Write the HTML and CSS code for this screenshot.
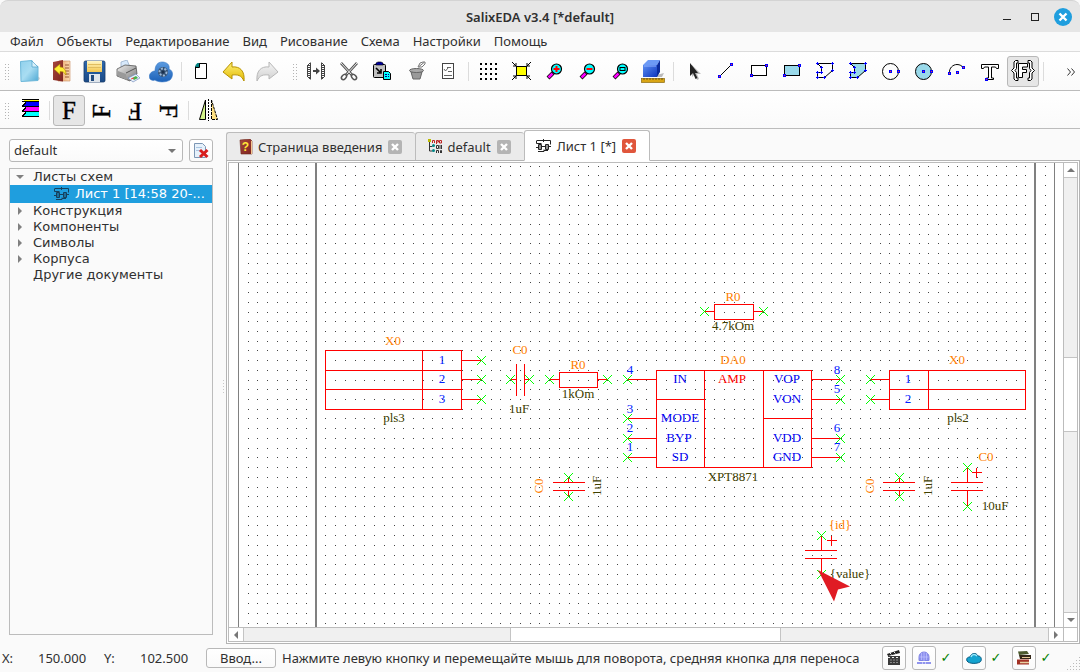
FILE: index.html
```html
<!DOCTYPE html>
<html lang="ru">
<head>
<meta charset="utf-8">
<title>SalixEDA v3.4 [*default]</title>
<link rel="stylesheet" href="styles.css">
</head>
<body>
<svg class="defs" width="0" height="0" aria-hidden="true">
  <defs>
    <linearGradient id="gPage" x1="0" y1="0" x2="1" y2="1"><stop offset="0" stop-color="#8fd0ec"/><stop offset=".5" stop-color="#a9ddf2"/><stop offset="1" stop-color="#4fa9d4"/></linearGradient>
    <linearGradient id="gBook" x1="0" y1="0" x2="1" y2="1"><stop offset="0" stop-color="#a8473c"/><stop offset="1" stop-color="#7c231f"/></linearGradient>
    <linearGradient id="gLeaf" x1="0" y1="0" x2="1" y2="0"><stop offset="0" stop-color="#e79a5c"/><stop offset="1" stop-color="#fbdcb4"/></linearGradient>
    <linearGradient id="gDisk" x1="0" y1="0" x2="0" y2="1"><stop offset="0" stop-color="#2d67ae"/><stop offset="1" stop-color="#1b4a86"/></linearGradient>
    <linearGradient id="gLabel" x1="0" y1="0" x2="0" y2="1"><stop offset="0" stop-color="#fff6c4"/><stop offset="1" stop-color="#f3c64d"/></linearGradient>
    <linearGradient id="gMetal" x1="0" y1="0" x2="1" y2="1"><stop offset="0" stop-color="#eeeeee"/><stop offset="1" stop-color="#777777"/></linearGradient>
    <linearGradient id="gCloud" x1="0" y1="0" x2="0" y2="1"><stop offset="0" stop-color="#5b9be0"/><stop offset="1" stop-color="#1c61b8"/></linearGradient>
    <linearGradient id="gGold" x1="0" y1="0" x2="0" y2="1"><stop offset="0" stop-color="#fff27a"/><stop offset="1" stop-color="#e2b800"/></linearGradient>
    <linearGradient id="gGray" x1="0" y1="0" x2="0" y2="1"><stop offset="0" stop-color="#f6f6f6"/><stop offset="1" stop-color="#cfcfcf"/></linearGradient>
    <linearGradient id="gCube" x1="0" y1="0" x2="1" y2="1"><stop offset="0" stop-color="#5b8df0"/><stop offset="1" stop-color="#0d36c0"/></linearGradient>
    <g id="lens"><path d="M11 13 6 18" stroke="#000" stroke-width="4"/><path d="M10.500 13.500 6.500 17.500" stroke="#f0f" stroke-width="2.500"/><circle cx="14.500" cy="9" r="5" fill="#0ff" stroke="#000" stroke-width="1.200"/></g>
    <g id="node"><rect x="-2" y="-2" width="3" height="3" fill="#00f"/><rect x="-1" y="-1" width="1" height="1" fill="#f33"/></g>
    <g id="sheet" fill="none" stroke-width="1"><path d="M2.500 5.500h3v5h-3zM9.500 5.500h3v5h-3zM.5 4.500h5M.5 1.500v3M1 1.500h13.500v4M12.500 7.500h2.500M2 12.500h6v-2M8 11.500h4M7.500 0v3M5.500 7.500h4M0 8.500h2.500M4 5v6M11 5v6"/></g>
    <path id="pin" d="M-4.500-4.500l9 9M4.500-4.500l-9 9"/>
    <path id="polyShape" d="M4.500 3.500h15v7l-8 7h-7v-5h4v-5z"/>
    <path id="polyNodes" d="M3 3.500h3M4.500 2v3M18 3.500h3M19.500 2v3M18 10.500h3M19.500 9v3M10 17.500h3M11.500 16v3M3 17.500h3M4.500 16v3M3 12.500h3M4.500 11v3M7 12.500h3M8.500 11v3M7 7.500h3M8.500 6v3"/>
  </defs>
</svg>

<header class="titlebar">
  <h1 class="title">SalixEDA v3.4 [*default]</h1>
  <div class="winbtns">
    <button class="winbtn" aria-label="Свернуть"><svg width="18" height="18"><path d="M5 11.500h8" stroke="#222"/></svg></button>
    <button class="winbtn" aria-label="Развернуть"><svg width="18" height="18"><rect x="5.500" y="5.500" width="7" height="7" fill="none" stroke="#222"/></svg></button>
    <button class="winbtn" aria-label="Закрыть"><svg width="18" height="18"><circle cx="9" cy="9" r="9" fill="#1f9ede"/><path d="M5.500 5.500l7 7M12.500 5.500l-7 7" stroke="#fff" stroke-width="2.400"/></svg></button>
  </div>
</header>

<nav class="menubar">
  <button class="menu">Файл</button><button class="menu">Объекты</button><button class="menu">Редактирование</button><button class="menu">Вид</button><button class="menu">Рисование</button><button class="menu">Схема</button><button class="menu">Настройки</button><button class="menu">Помощь</button>
</nav>

<div class="toolbar" role="toolbar">
  <span class="handle first"></span>
  <button class="tool" aria-label="Создать"><svg width="24" height="24"><path d="M6 21l16-1 1-2-3-2" fill="#ccc"/><path d="M3.500 1.500 15 .5l1 4 5 2v14l-17 1z" fill="url(#gPage)" stroke="#6db8da"/><path d="M15 1v6h6z" fill="#d8f1fb" stroke="#4c9fc8" stroke-width=".7"/></svg></button>
  <button class="tool" aria-label="Открыть"><svg width="24" height="24"><path d="M9 1h11v20H8z" fill="url(#gLeaf)" stroke="#c98a5c" stroke-width=".6"/><path d="M15 5h4M15 8h4M15 11h4M15 14h4M15 17h4" stroke="#9a5a34"/><path d="M3 2 13 0v21.500L3 20z" fill="url(#gBook)"/><path d="M4 9l6-5v3c4 0 6 3 6 8-2-3-3-3.500-6-3.500v3z" fill="#ffee36" stroke="#b68b00" stroke-width=".6"/></svg></button>
  <button class="tool" aria-label="Сохранить"><svg width="24" height="24"><rect x="1" y="1" width="21" height="21" rx="1.500" fill="url(#gDisk)" stroke="#173a68" stroke-width=".8"/><rect x="4" y="1" width="15" height="11" fill="url(#gLabel)"/><path d="M5 4.500h13M5 7.500h13" stroke="#e0bd60"/><rect x="6" y="14" width="11" height="8" fill="#dfe5eb"/><rect x="8" y="15" width="3" height="6" fill="#224a7c"/></svg></button>
  <button class="tool" aria-label="Печать"><svg width="24" height="24"><path d="M5 8V2l6-2 3 7" fill="#d7e9fb" stroke="#8fa8c4" stroke-width=".7"/><path d="M1 9l8-4 11 1 1 8-7 7-13-5z" fill="url(#gMetal)" stroke="#555" stroke-width=".8"/><path d="M2 11l8 3 1 6-9-4z" fill="#9a9a9a"/><path d="M10 13l10-5" stroke="#555"/><path d="M12 18l8-4 4 4-7 4z" fill="#e7effa" stroke="#6381b5" stroke-width=".6"/><path d="M16 18l4-2 2 2-4 2z" fill="#49b24c"/><path d="M15 19l3-1" stroke="#e44"/></svg></button>
  <button class="tool" aria-label="Обмен"><svg width="24" height="24"><path d="M1 19c-2-4 1-8 5-8 0-6 3-9 7-9 5 0 8 3 7 7 5 2 4 8 1 11-5 3-13 2-15 0-2 1-4 0-5-1z" fill="url(#gCloud)" stroke="#3978c6" stroke-width=".6"/><circle cx="14" cy="12" r="5" fill="#345070"/><circle cx="14" cy="12" r="3.500" fill="none" stroke="#9bb8d8" stroke-dasharray="2 1.500" stroke-width="2"/><circle cx="14" cy="12" r="1.500" fill="#1a304d"/></svg></button>
  <span class="sep"></span>
  <button class="tool" aria-label="Лист"><svg width="24" height="24"><path d="M9.500 3.500h8v15h-11v-12z" fill="#fff" stroke="#000"/><path d="M6.500 7V5l2-2h2v4z" fill="#008080"/><path d="M6.500 7.500h4v-4" fill="none" stroke="#000"/></svg></button>
  <button class="tool" aria-label="Отменить"><svg width="24" height="24"><path d="M1 12 10 2v5c8-1 13 4 12 14-3-6-6-6.500-12-6v4z" fill="url(#gGold)" stroke="#b89200"/></svg></button>
  <button class="tool" aria-label="Повторить"><svg width="24" height="24"><path d="M23 12 14 2v5C6 6 1 11 2 21c3-6 6-6.500 12-6v4z" fill="url(#gGray)" stroke="#b8b8b8"/></svg></button>
  <span class="handle"></span>
  <button class="tool" aria-label="Зеркально"><svg width="24" height="24"><g fill="none" stroke="#444"><path d="M6.500 2.500v17M3.500 5v12M6 3l-3 3M6 19l-3-3"/><path d="M5 5v13" stroke-width="2" stroke-dasharray="1 1"/><path d="M17.500 2.500v17M20.500 5v12M18 3l3 3M18 19l3-3"/><path d="M19 5v13" stroke-width="2" stroke-dasharray="1 1"/><path d="M9 11h4" stroke-width="2"/></g><path d="M12 7.500 16 11l-4 3.500z" fill="#444"/></svg></button>
  <button class="tool" aria-label="Вырезать"><svg width="24" height="24"><g fill="none"><path d="M4 3l11 12M20 3 9 15" stroke="#555" stroke-width="2.600"/><path d="M4 3l11 12M20 3 9 15" stroke="#eee"/><ellipse cx="7" cy="17" rx="3" ry="2" transform="rotate(-45 7 17)" stroke="#555" stroke-width="1.500"/><ellipse cx="17" cy="17" rx="3" ry="2" transform="rotate(45 17 17)" stroke="#555" stroke-width="1.500"/></g></svg></button>
  <button class="tool" aria-label="Вставить"><svg width="24" height="24"><rect x="3.500" y="4.500" width="12" height="13" rx="1" fill="#c0c0c0" stroke="#000"/><path d="M6 5V3l2-1h3l2 1v2z" fill="#0000a0" stroke="#000" stroke-width=".6"/><path d="M6 8l4 4M11 9v4H7" stroke="#000" stroke-width="1.600" fill="none"/><path d="M13.500 11.500h5l2 2v6h-7z" fill="#0ff" stroke="#000"/><path d="M15 14.500h4M15 16.500h4" stroke="#008" stroke-dasharray="2 1"/></svg></button>
  <button class="tool" aria-label="Удалить"><svg width="24" height="24"><path d="M8 12h11l-2 7h-7z" fill="#999" stroke="#666"/><ellipse cx="13.500" cy="10.500" rx="7" ry="2" fill="#aaa" stroke="#666"/><path d="M15 7l2-4 3-1h2v2l-3 3zM16 6.500l5-4" fill="#fff" stroke="#777"/></svg></button>
  <button class="tool" aria-label="Свойства"><svg width="24" height="24"><rect x="6.500" y="3.500" width="11" height="15" fill="#fff" stroke="#444"/><path d="M11 7.500h4M12 11.500h4M8 15.500h8M8 9l1.500 2L12 8" fill="none" stroke="#666"/></svg></button>
  <span class="sep"></span>
  <button class="tool" aria-label="Сетка"><svg width="24" height="24"><path d="M4 4h17M4 9h17M4 14h17M4 19h17" stroke="#000" stroke-width="2" stroke-dasharray="2 3"/></svg></button>
  <button class="tool" aria-label="Показать всё"><svg width="24" height="24"><rect x="7.500" y="6.500" width="10" height="9" fill="#ff0" stroke="#000"/><path d="M3 2l4 4M4 6h3V3M22 2l-4 4M18 3v3h3M3 20l4-4M4 16h3v3M22 20l-4-4M18 19v-3h3" fill="none" stroke="#000"/></svg></button>
  <button class="tool" aria-label="Увеличить"><svg width="24" height="24"><use href="#lens"/><path d="M11.500 9h6M14.500 6v6" stroke="red" stroke-width="2"/></svg></button>
  <button class="tool" aria-label="Уменьшить"><svg width="24" height="24"><use href="#lens"/><path d="M11.500 9h6" stroke="red" stroke-width="2"/></svg></button>
  <button class="tool" aria-label="Область"><svg width="24" height="24"><use href="#lens"/><rect x="12" y="7.500" width="5" height="3" fill="none" stroke="#000"/></svg></button>
  <button class="tool" aria-label="3D вид"><svg width="24" height="24"><path d="M8 17l15-4-2 4z" fill="#bbb"/><path d="M2 5 7 0h12l-3 5z" fill="#6c9af5"/><path d="M2 5h14v12H2z" fill="url(#gCube)"/><path d="M16 5l3-5v12l-3 5z" fill="#0b2c9c"/><path d="M3 6h12" stroke="#8fb2ff"/><rect x=".5" y="18.500" width="23" height="4" fill="#d9a514" stroke="#8b6a10" stroke-width=".7"/><path d="M3 18v2M6 18v2M9 18v2M12 18v2M15 18v2M18 18v2M21 18v2" stroke="#5c4508" stroke-width=".8"/></svg></button>
  <span class="sep"></span>
  <button class="tool" aria-label="Выбор"><svg width="24" height="24"><path d="M11 5v12l3-3 2 6 2-1-2-5h4z" fill="#bbb"/><path d="M9 3v13l3-3 2.500 6 2-1-2.500-5h3z" fill="#222"/></svg></button>
  <button class="tool" aria-label="Линия"><svg width="24" height="24"><path d="M5 17 18 4" stroke="#000"/><use href="#node" x="6" y="17"/><use href="#node" x="18" y="5"/></svg></button>
  <button class="tool" aria-label="Прямоугольник"><svg width="24" height="24"><rect x="4.500" y="5.500" width="15" height="10" fill="#fff" stroke="#000"/><use href="#node" x="5" y="16"/><use href="#node" x="20" y="6"/></svg></button>
  <button class="tool" aria-label="Закрашенный прямоугольник"><svg width="24" height="24"><rect x="4.500" y="5.500" width="15" height="10" fill="#99d9ea" stroke="#000"/><use href="#node" x="5" y="16"/><use href="#node" x="20" y="6"/></svg></button>
  <button class="tool" aria-label="Полигон"><svg width="24" height="24"><use href="#polyShape" fill="none" stroke="#000"/><use href="#polyNodes" stroke="#00f"/></svg></button>
  <button class="tool" aria-label="Закрашенный полигон"><svg width="24" height="24"><use href="#polyShape" fill="#99d9ea" stroke="#000"/><use href="#polyNodes" stroke="#00f"/></svg></button>
  <button class="tool" aria-label="Окружность"><svg width="24" height="24"><circle cx="11.500" cy="11.500" r="8" fill="none" stroke="#000"/><use href="#node" x="12" y="12"/><use href="#node" x="20" y="12"/></svg></button>
  <button class="tool" aria-label="Круг"><svg width="24" height="24"><circle cx="11.500" cy="11.500" r="8" fill="#99d9ea" stroke="#000"/><use href="#node" x="12" y="12"/><use href="#node" x="20" y="12"/></svg></button>
  <button class="tool" aria-label="Дуга"><svg width="24" height="24"><path d="M4.500 13C4 8 8 4.500 12 4.500c3 0 5 1.500 6 3" fill="none" stroke="#000"/><use href="#node" x="5" y="14"/><use href="#node" x="13" y="13"/><use href="#node" x="19" y="8"/></svg></button>
  <button class="tool" aria-label="Текст"><svg width="24" height="24"><path d="M3.500 4.500h17v4h-2l-1-1.500h-4v11h2v1.500h-7V18h2V7h-4l-1 1.500h-2z" fill="#fff" stroke="#000"/><use href="#node" x="9" y="20"/></svg></button>
  <button class="tool on" aria-label="Параметр" aria-pressed="true"><svg width="24" height="24"><g fill="#fff" stroke="#000"><path d="M7 .5H4.500L3 2v6L.5 10.500 3 13v6l1.500 1.500H7V18H5.500v-5.500l-1.500-2 1.500-2V3H7zM17 .5h2.500L21 2v6l2.500 2.500L21 13v6l-1.500 1.500H17V18h1.500v-5.500l1.500-2-1.500-2V3H17z"/><path d="M7.500 3.500h9v3.500h-5v2.500h4v3h-4v5h-4z"/></g></svg></button>
  <span class="sep"></span>
  <button class="more" aria-label="Ещё"><svg width="8" height="8"><path d="M.5.5l3 3.500-3 3.500M4.500.5l3 3.500-3 3.500" fill="none" stroke="#333"/></svg></button>
</div>

<div class="toolbar second" role="toolbar">
  <span class="handle first"></span>
  <button class="tool" aria-label="Слои"><svg width="24" height="24"><g shape-rendering="crispEdges"><path d="M7 1h15v2H5z" fill="#ff0"/><path d="M9 3h13v4H5z" fill="#00f"/><path d="M9 8h13v4H5z" fill="#f0f"/><path d="M9 13h13v4H5z" fill="#0ff"/><path d="M5 .5h17M5 2.500h17M5 7.500h17M5 12.500h17M5 17.500h17M5 7.500l4-4M5 12.500l4-4M5 17.500l4-4" stroke="#000" fill="none"/></g></svg></button>
  <span class="sep"></span>
  <button class="tool on" aria-label="Поворот 0" aria-pressed="true"><span class="letter">F</span></button>
  <button class="tool" aria-label="Поворот 90"><span class="letter r90">F</span></button>
  <button class="tool" aria-label="Поворот 180"><span class="letter r180">F</span></button>
  <button class="tool" aria-label="Поворот 270"><span class="letter r270">F</span></button>
  <span class="sep"></span>
  <button class="tool" aria-label="Отражение"><svg width="24" height="24"><path d="M9.500 1v19.500H3.500z" fill="#d3f58a" stroke="#000"/><path d="M15.500 1v19.500h6z" fill="#ffe080" stroke="#000" stroke-dasharray="3 1"/><path d="M12.500 0v22" stroke="#000" stroke-dasharray="2 1"/></svg></button>
</div>

<main class="main">
  <aside class="side">
    <div class="projrow">
      <div class="combo"><select class="select" aria-label="Проект"><option>default</option></select></div>
      <button class="closeproj" aria-label="Закрыть проект"><svg width="16" height="16"><path d="M1.500.5h8l3 3v11h-11z" fill="#e6f1fb" stroke="#7c96b4"/><path d="M3 4.500h6M3 7.500h6" stroke="#a9c6e2"/><path d="M7 7l7.500 7M14.500 7 7 14" stroke="#d81e1e" stroke-width="3"/></svg></button>
    </div>
    <ul class="tree">
      <li class="node"><i class="arrow open"></i>Листы схем</li>
      <li class="node selected"><svg class="leaf" width="16" height="14"><use href="#sheet" stroke="#16405c"/></svg><span class="clip">Лист 1 [14:58 20-...</span></li>
      <li class="node"><i class="arrow"></i>Конструкция</li>
      <li class="node"><i class="arrow"></i>Компоненты</li>
      <li class="node"><i class="arrow"></i>Символы</li>
      <li class="node"><i class="arrow"></i>Корпуса</li>
      <li class="node"><i class="arrow none"></i>Другие документы</li>
    </ul>
  </aside>
  <div class="splitter"></div>
  <section class="work">
    <div class="tabs">
      <div class="tab"><svg class="tabicon" width="14" height="16"><path d="M1 1 11 0l2 2v13H2z" fill="url(#gBook)" stroke="#6b2a1d" stroke-width=".6"/><path d="M12.500 2v13" stroke="#f3c48e"/><text class="glyph-q" x="6.500" y="12">?</text></svg><button class="tablabel">Страница введения</button><button class="tabclose" aria-label="Закрыть вкладку"><svg width="14" height="14"><path d="M4 4l6 6M10 4l-6 6" stroke="#fff" stroke-width="2.400"/></svg></button></div>
      <div class="tab"><svg class="tabicon" width="14" height="15"><path d="M1.500 2v10h3M1.500 7.500h3M3 2.500H1" fill="none" stroke="#333"/><rect width="3" height="3" fill="#bb0"/><circle cx="5.500" cy="6.500" r="1.500" fill="#088"/><circle cx="5.500" cy="11.500" r="1.500" fill="#088"/><path d="M4.500 4V1.500h2V4M8.500 5V1.500h2V3h-2M11.500 1.500h2V4h-2z" fill="none" stroke="#b22"/><path d="M8.500 6.500h2v3h-2zM12 6v4M13.500 6v4M8.500 14v-2.500h2V14M12.500 14v-2.500h1V14" fill="none" stroke="#333"/></svg><button class="tablabel">default</button><button class="tabclose" aria-label="Закрыть вкладку"><svg width="14" height="14"><path d="M4 4l6 6M10 4l-6 6" stroke="#fff" stroke-width="2.400"/></svg></button></div>
      <div class="tab active"><svg class="tabicon" width="16" height="14"><use href="#sheet" stroke="#222"/></svg><button class="tablabel">Лист 1 [*]</button><button class="tabclose hot" aria-label="Закрыть вкладку"><svg width="14" height="14"><path d="M4 4l6 6M10 4l-6 6" stroke="#fff" stroke-width="2.400"/></svg></button></div>
    </div>
    <div class="pane"><div class="view">
      <div class="canvas">
        <svg width="1700" height="1000" viewBox="229 163 1700 1000">
          <g id="dots" fill="#444" shape-rendering="crispEdges"></g>
          <g fill="#808080" shape-rendering="crispEdges"><rect x="238" y="163" width="1" height="1000"/><rect x="315" y="163" width="2" height="1000"/><rect x="1034" y="163" width="2" height="1000"/><rect x="1054" y="163" width="1" height="1000"/></g>
          <g fill="none" stroke="#f00" shape-rendering="crispEdges">
            <path d="M325.500 350.500h136v59h-136zM325.500 370.500h136M325.500 389.500h136M422.500 350.500v59M462 360.500h20M462 379.500h20M462 399.500h20"/>
            <path d="M516.500 364v32M524.500 364v32M510 379.500h6M525 379.500h5"/>
            <path d="M559.500 372.500h38v15h-38zM550 379.500h9M598 379.500h9"/>
            <path d="M553 482.500h32M553 490.500h32M568.500 478v4M568.500 491v6"/>
            <path d="M714.500 304.500h39v15h-39zM705 311.500h9M754 311.500h9"/>
            <path d="M656.500 370.500h155v97h-155zM704.500 370.500v97M763.500 370.500v97M656.500 399.500h48M763.500 418.500h48M627 379.500h29M627 418.500h29M627 438.500h29M627 457.500h29M812 379.500h29M812 399.500h29M812 438.500h29M812 457.500h29"/>
            <path d="M889.500 370.500h136v39h-136zM889.500 389.500h136M928.500 370.500v39M870 379.500h19M870 399.500h19"/>
            <path d="M883 482.500h32M883 490.500h32M899.500 478v4M899.500 491v6"/>
            <path d="M951 482.500h32M951 490.500h32M967.500 468v14M967.500 491v15M972 472.500h10M976.500 468v10"/>
            <path d="M805 550.500h32M805 558.500h32M821.500 536v14M821.500 559v15M827 540.500h10M831.500 536v10"/>
          </g>
          <g fill="none" stroke="#0f0">
            <use href="#pin" x="481.500" y="360.500"/><use href="#pin" x="481.500" y="379.500"/><use href="#pin" x="481.500" y="399.500"/>
            <use href="#pin" x="510.500" y="379.500"/><use href="#pin" x="529.500" y="379.500"/><use href="#pin" x="549.500" y="379.500"/><use href="#pin" x="607.500" y="379.500"/>
            <use href="#pin" x="568.500" y="477.500"/><use href="#pin" x="568.500" y="496.500"/><use href="#pin" x="704.500" y="311.500"/><use href="#pin" x="763.500" y="311.500"/>
            <use href="#pin" x="627.500" y="379.500"/><use href="#pin" x="627.500" y="418.500"/><use href="#pin" x="627.500" y="438.500"/><use href="#pin" x="627.500" y="457.500"/>
            <use href="#pin" x="840.500" y="379.500"/><use href="#pin" x="840.500" y="399.500"/><use href="#pin" x="840.500" y="438.500"/><use href="#pin" x="840.500" y="457.500"/>
            <use href="#pin" x="870.500" y="379.500"/><use href="#pin" x="870.500" y="399.500"/><use href="#pin" x="899.500" y="477.500"/><use href="#pin" x="899.500" y="496.500"/>
            <use href="#pin" x="967.500" y="467.500"/><use href="#pin" x="967.500" y="506.500"/><use href="#pin" x="821.500" y="535.500"/><use href="#pin" x="821.500" y="574.500"/>
          </g>
          <g class="ref">
            <text x="393" y="345">X0</text><text x="520" y="354">C0</text><text x="578" y="369">R0</text><text x="733" y="301">R0</text><text x="733" y="364">DA0</text><text x="957" y="364">X0</text><text x="986" y="461">C0</text><text x="840" y="529">{id}</text>
            <text transform="translate(543 486) rotate(-90)">C0</text><text transform="translate(874 486) rotate(-90)">C0</text>
          </g>
          <g class="val">
            <text x="394" y="422">pls3</text><text x="519" y="413">1uF</text><text x="578" y="398">1kOm</text><text x="733" y="330">4.7kOm</text><text x="733" y="481">XPT8871</text><text x="958" y="422">pls2</text><text x="995" y="510">10uF</text><text x="850" y="578">{value}</text>
            <text transform="translate(601 486) rotate(-90)">1uF</text><text transform="translate(932 486) rotate(-90)">1uF</text>
          </g>
          <g class="num">
            <text x="442" y="364">1</text><text x="442" y="383">2</text><text x="442" y="403">3</text>
            <text x="630" y="374">4</text><text x="630" y="413">3</text><text x="630" y="432">2</text><text x="630" y="451">1</text>
            <text x="837" y="374">8</text><text x="837" y="393">5</text><text x="837" y="432">6</text><text x="837" y="451">7</text>
            <text x="908" y="383">1</text><text x="908" y="403">2</text>
          </g>
          <g class="pinname">
            <text x="680" y="383">IN</text><text x="680" y="422">MODE</text><text x="679" y="442">BYP</text><text x="680" y="461">SD</text>
            <text x="787" y="383">VOP</text><text x="787" y="403">VON</text><text x="787" y="442">VDD</text><text x="787" y="461">GND</text>
          </g>
          <g class="kind"><text x="732" y="383">AMP</text></g>
          <path d="M818 570l32 16.500-12 3-4 12z" fill="#e01b24"/>
        </svg>
      </div>
      <div class="vscroll"><span class="step"><i class="tri up"></i></span><span class="track"></span><span class="thumb"></span><span class="track"></span><span class="step"><i class="tri down"></i></span></div>
      <div class="hscroll"><span class="step"><i class="tri left"></i></span><span class="track"></span><span class="thumb"></span><span class="track"></span><span class="step"><i class="tri right"></i></span></div>
      <div class="corner"></div>
    </div></div>
  </section>
</main>

<footer class="status">
  <span class="axis">X:</span><output class="coord">150.000</output>
  <span class="axis">Y:</span><output class="coord">102.500</output>
  <button class="enter">Ввод...</button>
  <span class="hint">Нажмите левую кнопку и перемещайте мышь для поворота, средняя кнопка для переноса</span>
  <div class="lamps">
    <button class="lamp" aria-label="Видео"><svg width="16" height="16"><path d="M2 6h12v9H2z" fill="#3a3a3a"/><path d="M1 4 13 0l1 3L2 6z" fill="#222"/><path d="M4 3l2 2M8 2l2 2M2 7.500h12" stroke="#eee" stroke-dasharray="2 2"/><path d="M4 10h8M4 12.500h8" stroke="#888" stroke-dasharray="2 1"/></svg></button>
    <button class="lamp" aria-label="Сервер"><svg width="16" height="16"><path d="M3 10.500V7a5 5 0 0 1 10 0v3.500z" fill="#8c90ee" stroke="#8084e6"/><path d="M3.500 7h9M8 2v9M5.500 3v7M10.500 3v7" stroke="#c3c6ff" stroke-width=".7"/><path d="M1 13h5M6.500 13h3M10 13h5" stroke="#9094ee" stroke-width="2"/></svg></button>
    <span class="check">✓</span>
    <button class="lamp" aria-label="Облако"><svg width="16" height="16"><path d="M1 11c-1-3 1-4 3-4 1-4 6-5 8-1 4 0 4 5 2 6-3 2-11 2-13-1z" fill="#14a3cf" stroke="#075a80"/><path d="M5 7c1-3 4-3 6-1" stroke="#9be8fb" stroke-width="1.500" fill="none"/></svg></button>
    <span class="check">✓</span>
    <button class="lamp" aria-label="Библиотека"><svg width="16" height="16"><path d="M2 1.500 11 1l2 3-10 1z" fill="#4c5a2e"/><path d="M3 5h12v4H4z" fill="#332618"/><path d="M6 7.500h8" stroke="#e6c896"/><path d="M1 9.500h12v5H1z" fill="#a23124"/><path d="M4 12.500h9" stroke="#e8cfa0" stroke-width="1.500"/></svg></button>
    <span class="check">✓</span>
    <span class="grip"></span>
  </div>
</footer>
<script src="script.js"></script>
</body>
</html>
```
FILE: styles.css
```css
* { box-sizing: border-box; }
body {
  margin: 0; height: 100vh; display: flex; flex-direction: column; overflow: hidden;
  background: #fafafa; color: #303030;
  font: 13px/16px "Noto Sans", sans-serif;
}
button, select { font: inherit; color: inherit; margin: 0; padding: 0; border: 0; background: none; }
svg { display: block; flex: none; }
.defs { position: absolute; }

.titlebar { flex: none; display: grid; grid-template-columns: 1fr auto 1fr; align-items: center; height: 32px; background: #e6e6e6; border-top: 1px solid #d4d4d4; border-radius: 8px 8px 0 0; }
.title { grid-column: 2; margin: 0; font: 600 13px/16px "Noto Sans", sans-serif; }
.winbtns { display: flex; justify-content: flex-end; gap: 10px; padding-right: 8px; }

.menubar { flex: none; display: flex; gap: 13px; height: 20px; padding: 0 0 1px 10px; align-items: center; border-bottom: 1px solid #dcdcdc; }

.toolbar { flex: none; display: flex; align-items: center; height: 39px; padding-top: 1px; border-bottom: 1px solid #bcbcbc; background: linear-gradient(#fff, #fafafa); }
.second { height: 38px; padding-top: 2px; }
.tool { flex: none; width: 32px; height: 31px; margin-right: 1px; padding: 3px 3px 2px; border: 1px solid transparent; border-radius: 3px; }
.tool.on { background: #e6e6e6; border-color: #b8b8b8; }
.sep { flex: none; width: 7px; height: 19px; background: linear-gradient(#dcdcdc, #dcdcdc) center / 1px 100% no-repeat; }
.handle { flex: none; width: 16px; height: 17px; background: radial-gradient(circle, #b4b4b4 0 1px, transparent 1px) 8px 0 / 3px 3px repeat-y, radial-gradient(circle, #b4b4b4 0 1px, transparent 1px) 11px 0 / 3px 3px repeat-y; }
.handle.first { width: 13px; background-position: 4px 0, 7px 0; }
.more { margin: 0 5px 0 auto; }
.letter { display: block; font: 25px/24px "Liberation Serif", serif; color: #000; text-align: center; -webkit-text-stroke: 0.4px #000; }
.r90 { transform: rotate(-90deg); }
.r180 { transform: rotate(180deg); }
.r270 { transform: rotate(90deg); }
.glyph-q { font: bold 12px "Liberation Sans", sans-serif; text-anchor: middle; fill: #ffe838; }

.main { flex: 1; min-height: 0; display: flex; }
.side { flex: none; width: 213px; padding: 10px 0 9px 9px; display: flex; flex-direction: column; gap: 6px; }
.projrow { display: flex; gap: 6px; height: 23px; }
.combo { position: relative; flex: 1; }
.combo::after { content: ""; position: absolute; right: 7px; top: 10px; border: 4px solid transparent; border-top-color: #777; border-bottom: 0; }
.select, .closeproj, .enter, .lamp { border: 1px solid #b8b8b8; border-radius: 3px; background: linear-gradient(#fff, #fafafa); }
.select { appearance: none; width: 100%; height: 23px; padding: 0 0 1px 4px; }
.closeproj { width: 24px; display: grid; place-items: center; }
.tree { flex: 1; min-height: 0; margin: 0; padding: 0; border: 1px solid #bcbcbc; list-style: none; font: 13px/16px "DejaVu Sans", sans-serif; }
.node { display: flex; align-items: center; height: 16px; white-space: nowrap; }
.node.selected { height: 18px; padding-left: 44px; background: #1f9ede; color: #fff; }
.leaf { margin-right: 5px; }
.clip { overflow: hidden; }
.arrow { flex: none; width: 23px; height: 8px; }
.arrow::before { content: ""; display: block; width: 0; margin-left: 8px; border: 4px solid transparent; border-left-color: #808080; border-right: 0; }
.arrow.open::before { margin: 2px 0 0 6px; border: 4px solid transparent; border-top-color: #808080; border-bottom: 0; }
.arrow.none::before { display: none; }
.splitter { flex: none; width: 13px; background: radial-gradient(circle, #c8c8c8 0 1px, transparent 1px) center / 3px 3px repeat-y; background-origin: content-box; background-clip: content-box; height: 17px; align-self: center; padding-left: 8px; }

.work { flex: 1; min-width: 0; display: flex; flex-direction: column; padding-top: 1px; }
.tabs { flex: none; display: flex; align-items: flex-end; height: 31px; margin-bottom: -1px; }
.tab { display: flex; align-items: center; height: 29px; padding: 0 13px 0 12px; background: #ebebeb; border: 1px solid #bcbcbc; border-right: 0; border-radius: 3px 3px 0 0; }
.tab.active { position: relative; height: 31px; padding: 0 13px 0 11px; background: #fff; border-right: 1px solid #bcbcbc; border-bottom-color: #fff; }
.tabicon { margin-right: 5px; }
.tabclose { width: 14px; height: 14px; margin-left: 6px; border-radius: 2px; background: #b4b4b4; }
.tabclose.hot { background: #e0563c; }
.pane { flex: 1; min-height: 0; display: flex; padding: 1px; border: 1px solid #b4b4b4; background: #fff; }
.view { flex: 1; min-width: 0; display: grid; grid-template: minmax(0, 1fr) 14px / minmax(0, 1fr) 14px; border: 1px solid #bcbcbc; }
.canvas { overflow: hidden; background: #fff; }
.canvas text { font: 13px "Liberation Serif", serif; text-anchor: middle; }
.ref { fill: #ff8000; }
.val { fill: #404000; }
.num { fill: #0020ff; }
.pinname { fill: #0000f0; }
.kind { fill: #f00; }
.vscroll { display: grid; grid-template-rows: 14px 181fr 73fr 182fr 14px; border-left: 1px solid #bcbcbc; }
.hscroll { display: grid; grid-template-columns: 14px 268fr 268fr 269fr 14px; border-top: 1px solid #bcbcbc; }
.corner { border-top: 1px solid #bcbcbc; border-left: 1px solid #bcbcbc; }
.step { display: grid; place-items: center; }
.track { background: #f0f0f0; }
.vscroll .track { border: solid #c4c4c4; border-width: 1px 0; }
.hscroll .track { border: solid #c4c4c4; border-width: 0 1px; }
.tri { border: 4px solid transparent; }
.tri.up { border-top: 0; border-bottom-color: #777; }
.tri.down { border-bottom: 0; border-top-color: #777; }
.tri.left { border-left: 0; border-right-color: #777; }
.tri.right { border-right: 0; border-left-color: #777; }

.status { flex: none; display: flex; align-items: center; height: 28px; padding-left: 2px; white-space: nowrap; }
.axis { width: 36px; }
.coord { width: 66px; }
.enter { width: 70px; height: 20px; margin-right: 6px; line-height: 16px; }
.lamps { display: flex; align-items: center; margin-left: auto; }
.lamp { width: 24px; height: 24px; margin-left: 6px; display: grid; place-items: center; }
.check { width: 20px; text-align: center; color: #008000; font-family: "DejaVu Sans", sans-serif; }
.grip { width: 14px; height: 14px; margin-left: 10px; align-self: flex-end; background: radial-gradient(circle, #bbb 0 1px, transparent 1px) 0 0 / 3px 3px; clip-path: polygon(100% 0, 100% 100%, 0 100%); }
```
FILE: script.js
```js
// Grid dots: one pixel each, snapped to whole pixels.
const dots = document.getElementById('dots');
const STEP = 9.722;
let d = '';
for (let r = 0; r < 100; r++) {
  const y = Math.floor(166.2 + r * STEP);
  for (let c = 0; c < 83; c++) {
    const x = Math.floor(248.2 + c * STEP);
    d += `M${x} ${y}h1v1h-1z`;
  }
}
const path = document.createElementNS('http://www.w3.org/2000/svg', 'path');
path.setAttribute('d', d);
dots.appendChild(path);
```
